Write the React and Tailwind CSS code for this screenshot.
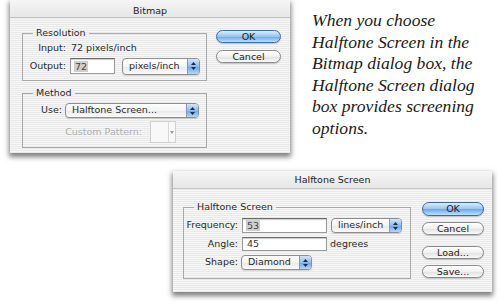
import React from "react";

const stripes =
  "bg-[repeating-linear-gradient(180deg,#e9e9e9_0px,#e9e9e9_1px,#f7f7f7_1px,#f7f7f7_2px)]";
const font = "font-['DejaVu_Sans',sans-serif]";

function Arrows() {
  return (
    <svg width="5" height="8" viewBox="0 0 5 8">
      <path d="M2.5 0 L5 3 L0 3 Z" fill="#1a2a55" />
      <path d="M2.5 8 L5 5 L0 5 Z" fill="#1a2a55" />
    </svg>
  );
}

function Popup({ label, className }) {
  return (
    <div
      className={`flex items-stretch rounded-[4px] border border-[#8e8e8e] bg-[linear-gradient(180deg,#ffffff_0%,#f4f4f4_50%,#e8e8e8_51%,#fafafa_100%)] shadow-[0_1px_1px_rgba(0,0,0,0.15)] overflow-hidden ${className}`}
    >
      <div className="flex-1 flex items-center pl-[6px] text-[#2a2a2a]">{label}</div>
      <div className="w-[12px] flex items-center justify-center border-l border-[#7c9cc8] bg-[linear-gradient(180deg,#d2e6fb_0%,#8ebcee_50%,#6aa4e4_51%,#b4d6f8_100%)]">
        <Arrows />
      </div>
    </div>
  );
}

function Field({ value, className }) {
  return (
    <div
      className={`flex items-center bg-white border border-[#9a9a9a] border-t-[#6a6a6a] shadow-[inset_0_1px_1px_rgba(0,0,0,0.2)] pl-[3px] ${className}`}
    >
      <span className="bg-[#cfcfcf] px-[1px] leading-[11px] text-[#444]">{value}</span>
    </div>
  );
}

function Button({ label, primary, className }) {
  return (
    <div
      className={`flex items-center justify-center rounded-full border text-[#222] leading-none ${
        primary
          ? "border-[#3d6aa6] bg-[linear-gradient(180deg,#dcecfc_0%,#98c4f0_50%,#6aa6e6_51%,#bfe0fb_100%)]"
          : "border-[#8a8a8a] bg-[linear-gradient(180deg,#ffffff_0%,#f1f1f1_50%,#e0e0e0_51%,#fafafa_100%)]"
      } shadow-[0_1px_1px_rgba(0,0,0,0.2)] ${className}`}
    >
      {label}
    </div>
  );
}

function Group({ title, className, children }) {
  return (
    <fieldset className={`border border-[#a9a9a9] m-0 p-0 ${className}`}>
      <legend className="ml-[10px] px-[3px] leading-[12px] text-[#2a2a2a]">{title}</legend>
      {children}
    </fieldset>
  );
}

function TitleBar({ title, h, pt }) {
  return (
    <div
      className={`${h} ${pt} flex justify-center leading-[12px] text-[#222] border-b border-[#c4c4c4] bg-[linear-gradient(180deg,#f6f6f6_0%,#e6e6e6_100%)]`}
    >
      {title}
    </div>
  );
}

export default function App() {
  return (
    <div className={`relative w-[500px] h-[306px] bg-white overflow-hidden ${font} text-[9.5px]`}>
      {/* Bitmap dialog */}
      <div
        className={`absolute left-[10px] top-0 w-[280px] h-[153px] ${stripes} shadow-[0_3px_5px_1px_rgba(0,0,0,0.5)] flex flex-col`}
      >
        <TitleBar title="Bitmap" h="h-[18px]" pt="pt-[5px]" />
        <div className="flex pl-[12px]">
          <div className="w-[185px] flex flex-col pt-[9px]">
            <Group title="Resolution" className="h-[54px]">
              <div className="flex mt-[3px] leading-[12px] text-[#2a2a2a]">
                <div className="w-[43px] text-right">Input:</div>
                <div className="ml-[5px]">72 pixels/inch</div>
              </div>
              <div className="flex items-center mt-[4px] h-[16px]">
                <div className="w-[43px] text-right text-[#2a2a2a]">Output:</div>
                <Field value="72" className="ml-[4px] w-[45px] h-[16px]" />
                <Popup label="pixels/inch" className="ml-[7px] w-[78px] h-[17px]" />
              </div>
            </Group>
            <Group title="Method" className="mt-[6px] h-[61px]">
              <div className="flex items-center mt-[4px]">
                <div className="w-[39px] text-right text-[#2a2a2a]">Use:</div>
                <Popup label="Halftone Screen..." className="ml-[3px] w-[134px] h-[15px]" />
              </div>
              <div className="flex items-center mt-[3px]">
                <div className="w-[119px] text-right text-[#b0b0b0]">Custom Pattern:</div>
                <div className="ml-[8px] w-[26px] h-[22px] flex border border-[#d0d0d0] bg-[#f8f8f8]">
                  <div className="flex-1" />
                  <div className="w-[7px] border-l border-[#d8d8d8] flex items-center justify-center">
                    <svg width="4" height="3" viewBox="0 0 4 3">
                      <path d="M0 0 L4 0 L2 3 Z" fill="#9a9a9a" />
                    </svg>
                  </div>
                </div>
              </div>
            </Group>
          </div>
          <div className="ml-[9px] pt-[12px] flex flex-col gap-[7px]">
            <Button label="OK" primary className="w-[65px] h-[13px]" />
            <Button label="Cancel" className="w-[65px] h-[13px]" />
          </div>
        </div>
      </div>

      {/* Caption */}
      <div className="absolute left-[312px] top-[10px] font-['Liberation_Serif',serif] italic text-[17.6px] leading-[21.5px] text-[#1a1a1a]">
        When you choose
        <br />
        Halftone Screen in the
        <br />
        Bitmap dialog box, the
        <br />
        Halftone Screen dialog
        <br />
        box provides screening
        <br />
        options.
      </div>

      {/* Halftone Screen dialog */}
      <div
        className={`absolute left-[173px] top-[171px] w-[319px] h-[121px] ${stripes} shadow-[0_3px_5px_1px_rgba(0,0,0,0.5)] flex flex-col`}
      >
        <TitleBar title="Halftone Screen" h="h-[18px]" pt="pt-[3px]" />
        <div className="flex pl-[10px]">
          <div className="pt-[12px]">
            <Group title="Halftone Screen" className="w-[228px] h-[78px]">
              <div className="flex items-center mt-[5px] h-[15px]">
                <div className="w-[54px] text-right text-[#2a2a2a]">Frequency:</div>
                <Field value="53" className="ml-[4px] w-[85px] h-[15px]" />
                <Popup label="lines/inch" className="ml-[4px] w-[71px] h-[15px]" />
              </div>
              <div className="flex items-center mt-[4px] h-[14px]">
                <div className="w-[54px] text-right text-[#2a2a2a]">Angle:</div>
                <div className="ml-[4px] w-[85px] h-[14px] flex items-center bg-white border border-[#9a9a9a] border-t-[#6a6a6a] shadow-[inset_0_1px_1px_rgba(0,0,0,0.2)] pl-[4px] text-[#333]">
                  45
                </div>
                <div className="ml-[3px] text-[#2a2a2a]">degrees</div>
              </div>
              <div className="flex items-center mt-[4px] h-[15px]">
                <div className="w-[54px] text-right text-[#2a2a2a]">Shape:</div>
                <Popup label="Diamond" className="ml-[3px] w-[71px] h-[15px]" />
              </div>
            </Group>
          </div>
          <div className="ml-[11px] pt-[13px] flex flex-col">
            <Button label="OK" primary className="w-[62px] h-[14px]" />
            <Button label="Cancel" className="mt-[6px] w-[62px] h-[13px]" />
            <Button label="Load..." className="mt-[11px] w-[62px] h-[13px]" />
            <Button label="Save..." className="mt-[6px] w-[62px] h-[13px]" />
          </div>
        </div>
      </div>
    </div>
  );
}
